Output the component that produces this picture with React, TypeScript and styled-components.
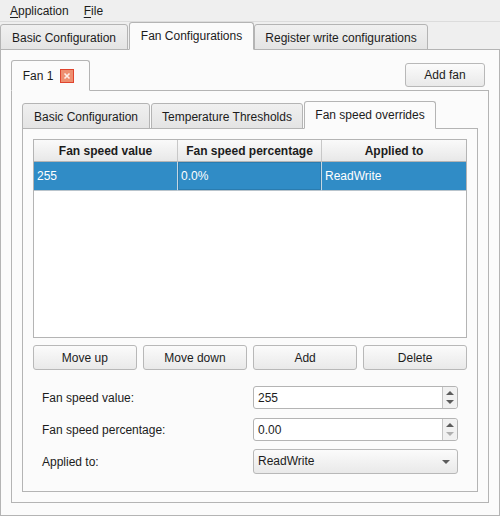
import React from "react";
import styled, { createGlobalStyle } from "styled-components";

const GlobalStyle = createGlobalStyle`
  html, body { margin: 0; padding: 0; }
  body {
    font-family: "Liberation Sans", Arial, sans-serif;
    font-size: 12px;
    color: #1c1c1c;
    background: #efefef;
  }
`;

const Window = styled.div`
  width: 500px;
  height: 516px;
  display: flex;
  flex-direction: column;
  overflow: hidden;
`;

const MenuBar = styled.div`
  height: 22px;
  flex: none;
  display: flex;
  gap: 15px;
  align-items: center;
  padding: 0 0 0 10px;
  background: #efefef;
  border-bottom: 1px solid #dcdcdc;
  box-sizing: border-box;
`;

const MenuItem = styled.span`
  u { text-underline-offset: 2px; }
`;

const TabRow = styled.div<{ $height: number }>`
  height: ${(p) => p.$height}px;
  flex: none;
  display: flex;
  align-items: flex-end;
  position: relative;
  z-index: 1;
  margin-bottom: -1px;
`;

const Tab = styled.div<{ $active?: boolean; $width: number; $tall?: number }>`
  width: ${(p) => p.$width}px;
  height: ${(p) => (p.$active ? p.$tall ?? 28 : 26)}px;
  box-sizing: border-box;
  display: flex;
  align-items: center;
  justify-content: center;
  gap: 7px;
  margin-right: ${(p) => (p.$active ? 0 : 1)}px;
  padding-top: ${(p) => (p.$active ? 0 : 2)}px;
  border: 1px solid #b4b4b4;
  border-bottom-color: ${(p) => (p.$active ? "#fbfbfb" : "#b4b4b4")};
  border-radius: 3px 3px 0 0;
  background: ${(p) =>
    p.$active ? "#fbfbfb" : "linear-gradient(#f0f0f0, #e4e4e4)"};
`;

const FanTab = styled(Tab)`
  padding-right: 4px;
`;

const Pane = styled.div<{ $pad: string }>`
  flex: 1;
  min-height: 0;
  display: flex;
  flex-direction: column;
  box-sizing: border-box;
  padding: ${(p) => p.$pad};
  background: #fbfbfb;
  border: 1px solid #b4b4b4;
`;

const FanTabRow = styled(TabRow)`
  justify-content: space-between;
  align-items: flex-start;
`;

const CloseBadge = styled.span`
  width: 14px;
  height: 14px;
  box-sizing: border-box;
  display: inline-flex;
  align-items: center;
  justify-content: center;
  background: #ee8f70;
  border: 1px solid #e0442e;
`;

const Button = styled.div`
  box-sizing: border-box;
  height: 25px;
  display: flex;
  align-items: center;
  justify-content: center;
  border: 1px solid #b8b8b8;
  border-radius: 3px;
  background: linear-gradient(#fbfbfb, #e9e9e9);
`;

const AddFan = styled(Button)`
  width: 80px;
  height: 24px;
  margin: 3px 4px 0 0;
`;

const Table = styled.div`
  height: 199px;
  flex: none;
  box-sizing: border-box;
  background: #fff;
  border: 1px solid #b4b4b4;
`;

const TableRow = styled.div`
  display: grid;
  grid-template-columns: 144px 144px 1fr;
`;

const HeaderCell = styled.div`
  height: 21px;
  display: flex;
  align-items: center;
  justify-content: center;
  font-weight: bold;
  background: linear-gradient(#fafafa, #e8e8e8);
  border-right: 1px solid #c8c8c8;
  border-bottom: 1px solid #b4b4b4;
  &:last-child { border-right: none; }
`;

const DataCell = styled.div<{ $current?: boolean }>`
  height: 29px;
  box-sizing: border-box;
  display: flex;
  align-items: center;
  padding-left: 3px;
  color: #fff;
  background: #308cc6;
  border-right: 1px solid #c4d6e2;
  border-bottom: 1px solid #b9c4cc;
  box-shadow: ${(p) => (p.$current ? "inset 0 0 0 1px #2a7cb0" : "none")};
  &:last-child { border-right: none; }
`;

const ButtonRow = styled.div`
  display: grid;
  grid-template-columns: repeat(4, 1fr);
  column-gap: 6.5px;
  margin-top: 7px;
`;

const Form = styled.div`
  display: grid;
  grid-template-columns: 211px 205px;
  grid-auto-rows: auto;
  row-gap: 9px;
  align-items: center;
  padding-left: 9px;
  margin-top: 16px;
`;

const Spin = styled.div`
  height: 23px;
  box-sizing: border-box;
  display: flex;
  background: #fff;
  border: 1px solid #b4b4b4;
  border-radius: 3px;
`;

const SpinValue = styled.div`
  flex: 1;
  display: flex;
  align-items: center;
  padding-left: 4px;
`;

const SpinArrows = styled.div`
  width: 14px;
  display: flex;
  flex-direction: column;
  align-items: center;
  justify-content: center;
  gap: 5px;
  background: #f1f1f1;
  border-left: 1px solid #c4c4c4;
  border-radius: 0 3px 3px 0;
`;

const Combo = styled(Button)`
  justify-content: space-between;
  margin-top: -1px;
  padding: 0 7px 0 4px;
`;

const ComboLabel = styled.span`
  margin-top: -1px;
`;

const Arrow = ({
  up,
  color,
  size = 8,
}: {
  up?: boolean;
  color: string;
  size?: number;
}) => (
  <svg width={size} height="4" viewBox="0 0 8 4" preserveAspectRatio="none">
    <path d={up ? "M4 0L8 4H0z" : "M0 0h8L4 4z"} fill={color} />
  </svg>
);

const SpinBox = ({ value, downColor }: { value: string; downColor: string }) => (
  <Spin>
    <SpinValue>{value}</SpinValue>
    <SpinArrows>
      <Arrow up color="#5c5c5c" />
      <Arrow color={downColor} />
    </SpinArrows>
  </Spin>
);

export default function App() {
  return (
    <Window>
      <GlobalStyle />
      <MenuBar>
        <MenuItem>
          <u>A</u>pplication
        </MenuItem>
        <MenuItem>
          <u>F</u>ile
        </MenuItem>
      </MenuBar>
      <TabRow $height={28}>
        <Tab $width={128}>Basic Configuration</Tab>
        <Tab $active $width={125}>
          Fan Configurations
        </Tab>
        <Tab $width={174}>Register write configurations</Tab>
      </TabRow>
      <Pane $pad="10px 10px 12px 10px">
        <FanTabRow $height={31}>
          <FanTab $active $width={79} $tall={31}>
            Fan 1
            <CloseBadge>
              <svg width="8" height="8" viewBox="0 0 8 8">
                <path
                  d="M1.5 1.5l5 5M6.5 1.5l-5 5"
                  stroke="#fdeee8"
                  strokeWidth="1.6"
                  fill="none"
                />
              </svg>
            </CloseBadge>
          </FanTab>
          <AddFan>Add fan</AddFan>
        </FanTabRow>
        <Pane $pad="10px 10px 10px 10px">
          <TabRow $height={28}>
            <Tab $width={128}>Basic Configuration</Tab>
            <Tab $width={152}>Temperature Thresholds</Tab>
            <Tab $active $width={132}>
              Fan speed overrides
            </Tab>
          </TabRow>
          <Pane $pad="10px 10px 0 10px">
            <Table>
              <TableRow>
                <HeaderCell>Fan speed value</HeaderCell>
                <HeaderCell>Fan speed percentage</HeaderCell>
                <HeaderCell>Applied to</HeaderCell>
              </TableRow>
              <TableRow>
                <DataCell>255</DataCell>
                <DataCell $current>0.0%</DataCell>
                <DataCell>ReadWrite</DataCell>
              </TableRow>
            </Table>
            <ButtonRow>
              <Button>Move up</Button>
              <Button>Move down</Button>
              <Button>Add</Button>
              <Button>Delete</Button>
            </ButtonRow>
            <Form>
              <span>Fan speed value:</span>
              <SpinBox value="255" downColor="#5c5c5c" />
              <span>Fan speed percentage:</span>
              <SpinBox value="0.00" downColor="#b0b0b0" />
              <span>Applied to:</span>
              <Combo>
                <ComboLabel>ReadWrite</ComboLabel>
                <Arrow color="#5c5c5c" />
              </Combo>
            </Form>
          </Pane>
        </Pane>
      </Pane>
    </Window>
  );
}
